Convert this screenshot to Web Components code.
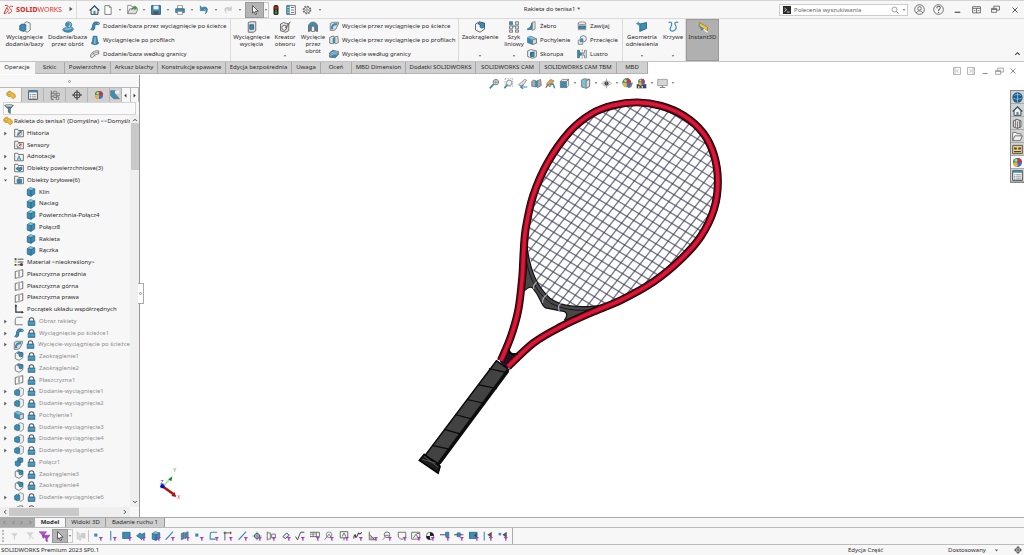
<!DOCTYPE html>
<html lang="pl">
<head>
<meta charset="utf-8">
<title>Rakieta do tenisa1</title>
<style>
  html, body { height: 100%; }
  body { margin: 0; font: 6px/7px "Noto Sans", "Open Sans", sans-serif; color: #2b2b2b; background: #fff; }
</style>
</head>
<body>
<cad-app></cad-app>
<script>
const B = '#3c8db3', L = '#7fbcd6', D = '#1d5876', G = '#666';
const cube = `<path d="M2 4l5-3 7 2v8l-6 4-6-2z" fill="${B}" stroke="${D}"/><path d="M2 4l5-3 7 2-6 3z" fill="${L}"/><path d="M8 6v9M2 4l6 2 6-3" stroke="${D}" fill="none"/>`;
const folder = `<path d="M1 14V2h5l1 2h8v10z" fill="#f4f4f4" stroke="${G}" stroke-width="1.4"/>`;
const solid = `<path d="M7 3l3-2 5 2v9l-4 3-4-2z" fill="#eee" stroke="${G}"/>`;
const funnel = c => `<path d="M2 2h12l-5 6v6l-2-1V8z" fill="${c}"/>`;
const tick = `<path d="M9 9.500h7l-2.500 3V16l-2-1v-2.500z" fill="#a63fc9"/>`;
const lines = (d, c = G, w = 1.3) => `<path d="${d}" fill="none" stroke="${c}" stroke-width="${w}"/>`;
const ball = `<circle cx="8" cy="8" r="6.500" fill="#3a6fd8"/><path d="M8 8V1.500A6.500 6.500 0 0 0 1.500 8z" fill="#2f9e44"/><path d="M8 8H1.500A6.500 6.500 0 0 0 8 14.500z" fill="#f2b52a"/><path d="M8 8V1.500A6.500 6.500 0 0 1 14.500 8z" fill="#d8322a"/><circle cx="6" cy="5" r="2" fill="#fff" opacity=".6"/>`;
const ICONS = {
  home: `<path d="M1 9l7-7 7 7h-2v6H3V9z" fill="#f3f3f3" stroke="#333" stroke-width="1.300"/><path d="M8 2l7 7h-2L8 4 3 9H1z" fill="${D}"/><path d="M6.500 15v-5h3v5" fill="${B}"/>`,
  page: `<path d="M3 1h7l3 3v11H3z" fill="#fff" stroke="${G}" stroke-width="1.300"/><path d="M10 1v3h3" fill="none" stroke="${G}"/>`,
  open: `<path d="M1 14V2h5l1 2h6v3" fill="#fff" stroke="${G}"/><path d="M1 14l3-7h12l-3 7z" fill="#ddd" stroke="${G}"/><path d="M6 9c0-4 3-5 5-5V2l4 3.500L11 9V7C9 7 8 8 6 9z" fill="#3f9b43"/>`,
  save: `<path d="M1 1h14v14H1z" fill="${B}" stroke="${D}" stroke-width="1.400"/><path d="M4 1h8v6H4z" fill="#e9f2f6"/><path d="M4 10h8v5H4z" fill="#555"/>`,
  print: `<path d="M4 1h8v5H4z" fill="#fff" stroke="${G}"/><path d="M1 6h14v6H1z" fill="${B}" stroke="${D}"/><path d="M4 10h8v5H4z" fill="#fff" stroke="${G}"/>`,
  undo: `<path d="M2 1v8h8L7 6.500c4-1 5 3 3 8 5-5 5-11-1-11.500-2 0-3 .5-4 1.500z" fill="${B}" stroke="${D}" stroke-width=".6"/>`,
  redo: `<path d="M14 1v8H6l3-2.500c-4-1-5 3-3 8C1 9.500 1 3.500 7 3c2 0 3 .5 4 1.500z" fill="#ccc"/>`,
  arrow: `<path d="M4 1l9 9H8.500l2 4.500-2 .8-2-4.600L4 13z" fill="#fff" stroke="#333" stroke-width="1.200"/>`,
  light: `<rect x="4" y="0" width="8" height="16" rx="3" fill="#222"/><circle cx="8" cy="4" r="2.500" fill="#d3201c"/><circle cx="8" cy="8.500" r="1.500" fill="#a5801a"/><circle cx="8" cy="12.500" r="2" fill="#2fa63c"/>`,
  list: `<path d="M1 1h14v14H1z" fill="#fff" stroke="${G}" stroke-width="1.400"/><path d="M1 1h5v14H1z" fill="${B}"/><path d="M8 4h5M8 8h5M8 12h5" stroke="${G}" stroke-width="1.400"/><path d="M2 4h3M2 8h3M2 12h3" stroke="#fff"/>`,
  gear: `<circle cx="8" cy="8" r="5.500" fill="none" stroke="${G}" stroke-width="3" stroke-dasharray="2.200 2.100"/><circle cx="8" cy="8" r="4.800" fill="#f7f7f7" stroke="${G}" stroke-width="1.200"/><circle cx="8" cy="8" r="2" fill="none" stroke="${G}" stroke-width="1.200"/>`,
  term: `<path d="M0 0h16v16H0z" fill="#2b2b2b"/><path d="M3 4l4 3.500L3 11M8 12h5" fill="none" stroke="#fff" stroke-width="1.600"/>`,
  find: `<circle cx="7" cy="7" r="5" fill="none" stroke="${G}" stroke-width="1.200"/><path d="M11 11l4 4" stroke="${G}" stroke-width="1.500"/>`,
  user: `<circle cx="8" cy="8" r="7" fill="none" stroke="#555" stroke-width="1.200"/><circle cx="8" cy="6.500" r="2.600" fill="none" stroke="#555" stroke-width="1.200"/><path d="M3.500 13c1-4 8-4 9 0" fill="none" stroke="#555" stroke-width="1.200"/>`,
  help: `<circle cx="8" cy="8" r="7" fill="none" stroke="#555" stroke-width="1.200"/><path d="M5.500 6c0-3.500 5-3.500 5-.5C10.500 7.500 8 7.500 8 10M8 11.500v1.500" fill="none" stroke="#555" stroke-width="1.500"/>`,
  min: lines('M3 13h10', '#555', 2.2),
  dock: lines('M1 3h14v11H1zM1 6h14M8 6v8M3 10h3M10 10h3', '#555', 1.4),
  restore: lines('M1 6h9v7H1zM5 6V2h10v7h-5M1 8h9', '#555', 1.4),
  close: lines('M3 3l10 10M13 3L3 13', '#555', 2),
  dockl: lines('M1 1h14v14H1zM4 1v14M11 5L7 8l4 3', '#777', 1.6),
  dockr: lines('M1 1h14v14H1zM12 1v14M5 5l4 3-4 3', '#777', 1.6),
  up: lines('M3 11l5-5 5 5', '#333', 2.4),
  down: lines('M3 5l5 5 5-5', '#333', 2.4),
  left: lines('M11 3L6 8l5 5', '#333', 2.2),
  right: lines('M5 3l5 5-5 5', '#333', 2.2),
  navl: `<path d="M11 2v12L4 8z" fill="#333"/>`,
  navr: `<path d="M5 2v12l7-6z" fill="#333"/>`,
  caret: `<path d="M3 5h10l-5 6z" fill="#555"/>`,
  exp: `<path d="M4 2l8 6-8 6z" fill="#555"/>`,
  boss: solid + `<path d="M1 6l3-2 5 1v7l-3 2-5-2z" fill="${B}" stroke="${D}"/>`,
  revolve: `<path d="M5 3c2-3 8-2 8 2 0 3-4 4-7 4-4 0-5 2-5 3 2 4 13 4 14-1 0-2-2-3-3-3" fill="${L}" stroke="${D}"/><circle cx="7" cy="5" r="3" fill="${B}"/><path d="M2 12c3 2 9 2 12-1" stroke="${B}" stroke-width="2.500" fill="none"/>`,
  sweep: `<path d="M2 12c3 2 4-1 4-4s2-6 6-4" fill="none" stroke="${D}" stroke-width="5"/><path d="M2 12c3 2 4-1 4-4s2-6 6-4" fill="none" stroke="${B}" stroke-width="3.500"/><circle cx="13" cy="4" r="2" fill="${L}" stroke="${D}"/>`,
  loft: `<path d="M5 2h6l1 8 2 3c-2 3-10 3-12 0l2-3z" fill="${B}" stroke="${D}"/><path d="M7 3h2v11H6z" fill="${L}"/>`,
  boundary: `<path d="M1 9c3-5 8-7 13-6v5c-4 0-8 2-10 6l-3-1z" fill="#eee" stroke="${G}" stroke-width="1.200"/><path d="M2 10c3-3 7-5 12-5M5 6l3 6" fill="none" stroke="${G}"/>`,
  cut: `<path d="M3 2l3-1h7v12l-3 2H3z" fill="#ddd" stroke="${G}" stroke-width="1.200"/><path d="M5 5h5v6H5z" fill="${B}" stroke="${D}"/>`,
  hole: `<path d="M2 4l4-2 7 2v9l-4 2-7-2z" fill="#ddd" stroke="${G}" stroke-width="1.200"/><circle cx="7" cy="9" r="3.200" fill="#fff" stroke="#444"/><path d="M15 1L8 9l2 0z" fill="#e8953a" stroke="#444" stroke-width=".7"/>`,
  revcut: `<path d="M2 14V6c2-6 10-6 12 0v8l-3-1V8H5v5z" fill="${B}" stroke="${G}" stroke-width="1.200"/><path d="M6 14V7h4v7z" fill="#eee" stroke="${G}"/>`,
  sweepcut: `<path d="M2 4l4-2h9v3l-4 8-3 2H2z" fill="#ddd" stroke="${G}" stroke-width="1.200"/><path d="M5 13c-1-6 2-8 8-8" fill="none" stroke="${B}" stroke-width="3.500"/>`,
  loftcut: `<path d="M1 4l4-2h3v11l-3 1-4-1zM9 3l5-1 1 10-4 2-2-1z" fill="#ddd" stroke="${G}" stroke-width="1.200"/><path d="M6 5h4v8H6z" fill="${B}"/>`,
  boundcut: `<path d="M1 6l5-4 9 2v5l-5 5-9-1z" fill="${B}" stroke="${G}" stroke-width="1.200"/><path d="M2 8c3-3 7-4 12-3M2 11c3-3 6-4 11-3" fill="none" stroke="#eee"/>`,
  fillet: `<path d="M2 4l5-3 7 2v8l-6 4-6-3z" fill="#f4f4f4" stroke="${G}" stroke-width="1.300"/><path d="M7 2l7 1v4c-1 3-4 3-6 1 1-3-1-4-3-4z" fill="${B}" stroke="${D}"/>`,
  pattern: `<g fill="#ddd" stroke="${G}"><path d="M2 1h4v4H2zM2 6.500h4v4H2zM2 12h4v3H2zM10 1h4v4h-4zM10 6.500h4v4h-4zM10 12h4v3h-4z"/></g><path d="M2 1h4v4H2z" fill="${B}"/><path d="M7 5l3 2-3 2z" fill="${B}"/>`,
  rib: `<path d="M8 2l5-1v12l-5 2z" fill="#ddd" stroke="${G}"/><path d="M8 3v10l-7 1v-2c4 0 5-4 7-9z" fill="${B}" stroke="${D}"/>`,
  draft: `<path d="M1 4l5-2 9 4v7l-6 2-8-3z" fill="${B}" stroke="${D}"/><path d="M1 4l5-2 9 4-6 2z" fill="${L}"/><path d="M9 8l6-2v7l-6 2z" fill="#ddd" stroke="${G}"/>`,
  shell: `<path d="M1 3l5-2 9 2v9l-6 3-8-3z" fill="#eee" stroke="${G}" stroke-width="1.300"/><path d="M5 5l7-1v8l-4 1-3-1z" fill="${D}"/><path d="M7 6h4v6H7z" fill="${B}"/>`,
  wrap: `<path d="M2 3h12v11H2z" fill="#ddd" stroke="${G}"/><ellipse cx="8" cy="3.500" rx="6" ry="2.200" fill="#eee" stroke="${G}"/><path d="M3 8h10v4H3z" fill="${B}" stroke="${D}"/>`,
  inter: `<circle cx="10" cy="6" r="5" fill="#eee" stroke="${G}" stroke-width="1.200"/><path d="M2 8h7v7H2z" fill="#ddd" stroke="${G}"/><path d="M5 8c0-3 5-4 5-1v4H5z" fill="${B}"/>`,
  mirror: `<path d="M1 2h3v4h3v4H4v4H1z" fill="${B}" stroke="${D}"/><path d="M15 2h-3v4h-2v4h2v4h3z" fill="#ddd" stroke="${G}"/><path d="M8.500 1v14" stroke="${G}" stroke-dasharray="3 1"/>`,
  geom: `<path d="M5 4l9-2v8l-9 4z" fill="${B}" stroke="${D}"/><path d="M3 1v5M.500 3.500h5" stroke="${B}" stroke-width="1.500"/>`,
  curve: lines('M2 2c5-2 5 3 3 6s0 7 4 5 4-5 2-8 2-4 4-3', B, 1.6),
  instant: `<path d="M3 2l11 6v5L3 7z" fill="#ecc44a" stroke="#9b7a1a"/><path d="M2 5l4 8 3-2z" fill="${B}"/><path d="M9 11l5 4" stroke="#fff" stroke-width="1.600"/>`,
  part: `<path d="M1 6c2-5 7-5 8-2l2 1c3 0 4 3 4 6l-3 3-3-2-2-2c-3 1-6 0-6-4z" fill="#f0b93a" stroke="#a87710"/><circle cx="5" cy="6" r="1.800" fill="#fff6d8" stroke="#a87710"/>`,
  props: `<path d="M1 1h14v14H1z" fill="#fff" stroke="#444" stroke-width="1.400"/><path d="M1 1h14v3H1z" fill="${B}"/><path d="M3 7h2M3 10h2M3 13h2" stroke="${B}" stroke-width="1.600"/><path d="M6 7h7M6 10h7M6 13h7" stroke="#555"/>`,
  config: `<path d="M2 1v14h4M2 5h4M2 10h4" fill="none" stroke="#555" stroke-width="1.300"/><path d="M6 2h4v4H6zM6 8h4v4H6zM11 5h4v4h-4zM10 11h4v4h-4z" fill="#ddd" stroke="#555"/>`,
  target: `<circle cx="8" cy="8" r="5" fill="none" stroke="#333" stroke-width="1.500"/><path d="M8 0v16M0 8h16" stroke="#333" stroke-width="1.500"/>`,
  ball,
  cam: `<path d="M1 1h8v6l6 7H6L1 9z" fill="${B}" stroke="${G}"/><path d="M8 1h7v5H8z" fill="#eee"/>`,
  filter: `<path d="M1 2h14l-5 6v7l-3-2V8z" fill="${B}" stroke="#444"/><ellipse cx="8" cy="3" rx="6.500" ry="1.800" fill="#e6eef2" stroke="#444"/>`,
  hist: folder + `<path d="M5 12l7-7" stroke="${B}" stroke-width="2.500"/><circle cx="9" cy="9" r="3" fill="none" stroke="${G}"/>`,
  sensor: folder + `<circle cx="8" cy="9" r="3.500" fill="#fff" stroke="${G}"/><path d="M8 9l4-3" stroke="#d33" stroke-width="2"/><path d="M5 12l2-2" stroke="${B}" stroke-width="2"/>`,
  annot: folder + `<path d="M5 13l3-7 3 7M6 11h4" fill="none" stroke="${B}" stroke-width="1.500"/>`,
  surf: folder + `<path d="M3 9l4-3 2 2 3-2 1 4-4 3-3-2z" fill="${B}" stroke="${D}"/>`,
  bodies: folder + `<path d="M5 7l3-1 4 1v5l-4 1-3-1z" fill="${B}" stroke="${D}"/>`,
  cube,
  material: `<path d="M1 2h3v3H1zM1 11h3v3H1z" fill="#444"/><path d="M1 6.500h3v3H1z" fill="#e2b53c"/><path d="M6 3.500h9M6 8h9M6 12.500h4" stroke="#444" stroke-width="1.500"/><circle cx="12" cy="12" r="2.500" fill="#444"/>`,
  plane: lines('M2 4l4-1M10 2l4-1v11l-4 1M6 14l-4 1V4M8 1v14', '#555', 1.3),
  origin: `<path d="M3 2v11h11" fill="none" stroke="#333" stroke-width="2"/><path d="M1 4l2-4 2 4zM12 11l4 2-4 2z" fill="#333"/>`,
  sketch: lines('M14 2H6C3 2 2 4 2 6v8h12', '#666', 1.3),
  combine: `<path d="M6 2l4-1 4 1v6l-4 1-4-1z" fill="${B}" stroke="${D}"/><path d="M2 7l4-1 4 1v6l-4 2-4-2z" fill="${B}" stroke="${D}"/>`,
  lock: `<path d="M4 8V5c0-5 8-5 8 0v3" fill="none" stroke="#555" stroke-width="1.800"/><path d="M2 7h12v8H2z" fill="${B}" stroke="${D}"/><path d="M2.500 10.500h11" stroke="${L}"/>`,
  zoomfit: `<circle cx="10" cy="6" r="4" fill="#eaf4f8" stroke="${G}" stroke-width="1.200"/><path d="M7 9l-6 6" stroke="${B}" stroke-width="2.500"/><path d="M10 3v6M7 6h6" stroke="${G}"/>`,
  zoomarea: `<path d="M3 1h11v11H3z" fill="none" stroke="#888" stroke-dasharray="2 1.500"/><circle cx="9" cy="7" r="4" fill="#eaf4f8" stroke="${G}"/><path d="M6 10l-4 5" stroke="${B}" stroke-width="2.500"/>`,
  prev: `<path d="M2 10L11 2l3 1-6 9z" fill="#ddd" stroke="#777"/><path d="M15 13H6M9 10l-4 3 4 3" fill="none" stroke="${B}" stroke-width="1.600"/>`,
  section: `<path d="M1 5l3-2 3 1v9l-6-1zM9 4l5-2 1 9-6 3z" fill="#aaa" stroke="${G}"/><path d="M6 4h4v9H6z" fill="${B}"/>`,
  dynview: `<path d="M2 9l6-7 5 2-6 9z" fill="#e8a23c" stroke="#777"/><path d="M7 9h5l2 6" fill="none" stroke="${B}" stroke-width="2"/><path d="M1 14l4-5" stroke="#777" stroke-width="2"/>`,
  orient: `<path d="M2 5h9v9H2z" fill="${B}" stroke="${G}"/><path d="M2 5l3-3h9l-3 3zM14 2v9l-3 3V5z" fill="#eee" stroke="${G}"/>`,
  display: `<path d="M2 3l4-2 8 1v10l-5 3-7-2z" fill="${L}" stroke="${G}"/><path d="M9 4l5-2v10l-5 3z" fill="#ddd" stroke="${G}"/>`,
  eye: `<path d="M1 8c4-5 10-5 14 0-4 5-10 5-14 0z" fill="#ddd" stroke="#aaa"/><circle cx="8" cy="8" r="3" fill="#444"/><path d="M8 1v14" stroke="#888"/>`,
  appear: `<g transform="translate(-1 -1)">${ball}</g><path d="M15 7l-6 7 4-1z" fill="#e8953a" stroke="#555"/>`,
  scene: `<path d="M1 9h14v6H1z" fill="#444"/><g transform="translate(2 0) scale(.75)">${ball}</g><path d="M3 12h2v2H3zM8 12h2v2H8z" fill="#fff"/>`,
  monitor: `<path d="M1 2h14v9H1z" fill="#d6d6d6" stroke="#888"/><path d="M7 11h2v2h3v1.500H4V13h3z" fill="#888"/>`,
  globe: `<circle cx="8" cy="8" r="7.500" fill="#1d5f8c"/><path d="M3 5c3-2 7-2 10 0M2 9c4 2 8 2 12 0M8 1v14" stroke="#8fc3e0" stroke-width="1.200" fill="none"/>`,
  library: `<path d="M2 4l5-2 6 2v9l-5 2-6-2z" fill="#ddd" stroke="#555" stroke-width="1.300"/><path d="M5 3v10M8 5v10M11 4v9" stroke="#555" fill="none"/>`,
  folder: `<path d="M1 14V2h5l1 2h6v3" fill="#fff" stroke="${G}" stroke-width="1.300"/><path d="M1 14l3-7h11l-3 7z" fill="#eee" stroke="${G}" stroke-width="1.300"/>`,
  palette: `<path d="M1 2h14v12H1z" fill="#f1d27a" stroke="#555" stroke-width="1.400"/><path d="M3 5h4v3H3zM9 5h4v3H9zM3 10h10v2H3z" fill="#444"/>`,
  f0: funnel('#d2d2d2'), f1: funnel('#d8d8d8') + lines('M6 3l8 10', '#ccc'),
  f2: `<path d="M0 1h11L7 6v5L5 9V6z" fill="#b558cf" stroke="#6d2485" stroke-width=".6"/><path d="M5 6h11l-4 5v5l-2-2v-3z" fill="#a63fc9" stroke="#6d2485" stroke-width=".6"/>`,
  selx: `<path d="M2 1l8 8H6l2 5-2 1-2-4-2 2z" fill="#ddd" stroke="#bbb"/><path d="M8 3h7v9H9z" fill="#ccc"/>`,
  t0: `<path d="M2 4h5v5H2z" fill="${B}"/>` + tick, t1: lines('M6 0v15', B, 1.8) + tick,
  t2: `<path d="M1 2h12v10H1z" fill="${B}" stroke="${D}"/>` + tick,
  t3: `<path d="M1 8l5-5 3 2 5-2v6l-5 5-3-3z" fill="${B}" stroke="${D}"/>` + tick,
  t4: cube + tick, t5: lines('M1 14L13 1', B, 1.8) + tick,
  t6: `<path d="M2 4l5-2v10l-5 2zM8 3l5-2v9l-5 2z" fill="${B}" stroke="${G}"/>` + tick,
  t7: lines('M13 2H5C2 2 2 4 2 5v8h9', B, 1.8) + tick,
  t8: lines('M3 15V3h11M1 3h4M3 1v4M12 1v4', '#555', 1.5) + tick,
  t9: `<circle cx="8" cy="8" r="4" fill="#dbeaf1" stroke="${D}" stroke-width="1.500"/><path d="M8 1v14M1 8h14" stroke="#555"/>` + tick,
  t10: lines('M2 1v14M2 3h5v10H2M9 5h6v6H9z', '#555', 1.2) + tick,
  t11: `<path d="M3 9l6-6 4 4-6 5z" fill="#dbeaf1" stroke="#444" stroke-width="1.500"/>` + tick,
  t12: lines('M1 9l3 5 5-12h6', '#444', 1.5) + tick,
  t13: lines('M0 2h15v7H0zM5 2v7M10 2v7M2 5h2M7 5h2', '#555', 1.3) + tick,
  t14: `<circle cx="8" cy="6" r="4.500" fill="none" stroke="#555"/>` + lines('M1 14l7-9 4 6') + tick,
  t15: lines('M2 1h12v10H2zM5 9l3-6 3 6M8 11v4', '#444', 1.2) + tick,
  t16: lines('M1 12c1-6 3-8 3-4s2 2 4-3 1 4 6-3', '#444', 1.8) + tick,
  t17: lines('M2 1v13h12M2 5l9 9M5 8v5M8 10v4', '#555', 1.3) + tick,
  t18: `<circle cx="8" cy="6" r="4.500" fill="none" stroke="#555" stroke-width="1.300"/>` + lines('M5 7h6M1 14l4-4') + tick,
  t19: lines('M2 2h12v6c0 3-3 5-6 5S2 11 2 8z', '#666', 1.4) + tick,
  t20: lines('M1 2h13v11H1zM4 11l4-6 3 6M9 4h4', '#666', 1.4) + tick,
  t21: `<circle cx="8" cy="8" r="6" fill="#eee" stroke="#333"/><path d="M8 8V2a6 6 0 0 1 6 6zM8 8v6a6 6 0 0 1-6-6z" fill="#222"/>` + tick,
  t22: lines('M0 6h9', '#444', 1.5) + `<path d="M9 2h5v7H9z" fill="${B}" stroke="${D}"/>` + tick,
  t23: lines('M0 6h15', '#444', 1.5) + `<path d="M5 3h5v6H5z" fill="${B}" stroke="${D}"/>` + tick,
  t24: `<path d="M0 2h13v10H0z" fill="${B}" stroke="${D}"/><path d="M12 3l-4 4 4 4z" fill="#444"/>` + tick,
  t25: lines('M2 1v14', B, 1.8) + `<path d="M14 1L7 6l7 5z" fill="#555"/>` + tick,
  t26: `<path d="M1 3h4v4H1z" fill="${B}"/><path d="M14 1L7 6l7 5z" fill="#555"/>` + tick
};

const fragment = html => Object.assign(document.createElement('template'), { innerHTML: html }).content;
function define(name, css, html, setup) {
  const t = document.createElement('template');
  t.innerHTML = `<style>:host{box-sizing:border-box}*{box-sizing:border-box}button{font:inherit;color:inherit;background:none;border:0;padding:0;margin:0}${css}</style>${html}`;
  customElements.define(name, class extends HTMLElement {
    connectedCallback() {
      if (this.shadowRoot) return;
      this.attachShadow({ mode: 'open' }).append(t.content.cloneNode(true));
      if (setup) setup(this, this.shadowRoot);
    }
  });
}
const ico = (n, s = '') => `<cad-icon name="${n}" ${s && `style="--s:${s}px"`}></cad-icon>`;
const btn = (n, label, s) => `<button type="button" aria-label="${label}">${ico(n, s)}</button>`;

define('cad-icon', `:host{display:inline-flex;flex:none;width:var(--s,10px);height:var(--s,10px)}svg{width:100%;height:100%;display:block}`, '',
  (h, r) => r.append(fragment(`<svg viewBox="0 0 16 16" aria-hidden="true">${ICONS[h.getAttribute('name')]}</svg>`)));

/* Title bar */
define('cad-titlebar', `
  :host{display:flex;align-items:center;height:19px;background:#f7f7f7;border-top:1px solid #d4d4d4;border-bottom:1px solid #dadada}
  .brand{display:flex;align-items:center;gap:2px;width:66px;padding-left:3px;color:#d9362f}
  .brand svg{width:11px;height:11px}
  .brand b{font-weight:800}
  .brand span{font-size:7px;line-height:8px}
  .more{width:11px;height:17px;border-right:1px solid #dcdcdc;display:flex;align-items:center;padding-left:2px}
  .quick{display:flex;align-items:center;padding-left:10px}
  .quick button{display:flex;align-items:center;justify-content:center;width:10px;height:16px}
  .quick .w{width:14px}
  .quick .x{width:16px}
  .quick .sel{width:19px;background:#b4b4b4;border:1px solid #999}
  .quick .seld{width:5px;border:1px solid #ccc;border-left:0}
  h1{flex:1;margin:0;font:inherit;text-align:center}
  .search{display:flex;align-items:center;gap:3px;width:129px;height:12px;border:1px solid #ccc;background:#fff;padding:0 1px 0 3px}
  .search input{flex:1;min-width:0;border:0;padding:0;font:inherit;height:9px;outline:0;background:none}
  .search input::placeholder{color:#666;opacity:1}
  .win{display:flex;padding-left:2px}
  .win button{width:19px;height:16px;display:flex;align-items:center;justify-content:center}
`, `
  <div class="brand"><svg viewBox="0 0 22 22" aria-hidden="true"><g fill="none" stroke="#d9362f" stroke-width="2"><path d="M4 3c7-1 8 2 3 5M2 19l5-11c5 0 5 10-5 11M20 5c-7-2-9 2-5 5s2 9-5 8"/></g></svg><span><b>SOLID</b>WORKS</span></div>
  <div class="more">${btn('exp', 'Menu', 6)}</div>
  <div class="quick">
    ${[['home', 'Strona główna', 11], ['page', 'Nowy', 10], ['caret'], ['open', 'Otwórz', 11], ['caret'], ['save', 'Zapisz', 10], ['caret'], ['print', 'Drukuj', 10], ['caret'], ['undo', 'Cofnij', 10], ['caret'], ['redo', 'Ponów', 10]]
      .map(([n, l, s]) => n === 'caret' ? btn('caret', 'Więcej', 4) : `<button class="w" type="button" aria-label="${l}">${ico(n, s)}</button>`).join('')}
    ${btn('caret', 'Więcej', 4)}<button class="sel" type="button" aria-label="Wybierz">${ico('arrow', 10)}</button><button class="seld" type="button" aria-label="Więcej">${ico('caret', 4)}</button>
    <button class="w" type="button" aria-label="Przebuduj">${ico('light', 10)}</button>
    <button class="x" type="button" aria-label="Właściwości">${ico('list', 10)}</button>
    <button class="x" type="button" aria-label="Opcje">${ico('gear', 10)}</button>
    ${btn('caret', 'Więcej', 4)}
  </div>
  <h1>Rakieta do tenisa1 *</h1>
  <div class="search">${ico('term', 8)}<input type="search" aria-label="Polecenia wyszukiwania" placeholder="Polecenia wyszukiwania">${ico('find', 8)}${ico('caret', 4)}</div>
  <div class="win">${btn('user', 'Konto', 11)}${btn('help', 'Pomoc', 11)}${btn('min', 'Minimalizuj', 9)}${btn('dock', 'Rozciągnij', 9)}${btn('restore', 'Przywróć', 9)}${btn('close', 'Zamknij', 8)}</div>`);

/* Ribbon commands: large with caption below, and small with caption beside */
define('cad-big', `
  :host{display:flex;width:var(--w,40px)}
  button{flex:1;display:flex;flex-direction:column;align-items:center;padding-top:2px;text-align:center;white-space:nowrap}
  .t{height:14px;margin-top:1px}
  .c{margin-top:5px;height:6px}
  :host([active]) button{background:#b0b0b0;border:1px solid #999;padding-top:1px}
`, `<button type="button"><span class="t"><slot></slot></span><span class="c"></span></button>`,
  (h, r) => {
    r.querySelector('button').prepend(fragment(ico(h.getAttribute('icon'), 12)));
    if (h.hasAttribute('menu')) r.querySelector('.c').innerHTML = ico('caret', 4);
  });
define('cad-small', `
  :host{display:flex;height:14px}
  button{display:flex;align-items:center;gap:3px;white-space:nowrap}
`, `<button type="button"><slot></slot></button>`,
  (h, r) => r.querySelector('button').prepend(fragment(ico(h.getAttribute('icon'), 10))));

const big = (i, t, w, x = '') => `<cad-big icon="${i}" style="--w:${w}px" ${x}>${t}</cad-big>`;
const small = (i, t) => `<cad-small icon="${i}">${t}</cad-small>`;
define('cad-ribbon', `
  :host{display:flex;height:43px;background:#f7f7f7;border-bottom:1px solid #c4c4c4}
  .g{display:flex;border-right:1px solid #dadada}
  .col{display:flex;flex-direction:column}
  .wide{padding-left:1px}
  .end{margin-left:auto;display:flex;align-items:flex-end;padding:0 3px 2px 0}
`, `
  <div class="g" style="width:231px;padding-left:3px">${big('boss', 'Wyciągnięcie<br>dodania/bazy', 43)}${big('revolve', 'Dodanie/baza<br>przez obrót', 43)}
    <div class="col wide">${small('sweep', 'Dodanie/baza przez wyciągnięcie po ścieżce')}${small('loft', 'Wyciągnięcie po profilach')}${small('boundary', 'Dodanie/baza według granicy')}</div></div>
  <div class="g" style="width:228px">${big('cut', 'Wyciągnięcie<br>wycięcia', 41)}${big('hole', 'Kreator<br>otworu', 26, 'menu')}${big('revcut', 'Wycięcie<br>przez<br>obrót', 30)}
    <div class="col wide">${small('sweepcut', 'Wycięcie przez wyciągnięcie po ścieżce')}${small('loftcut', 'Wycięcie przez wyciągnięcie po profilach')}${small('boundcut', 'Wycięcie według granicy')}</div></div>
  <div class="g" style="width:164px">${big('fillet', 'Zaokrąglenie', 42, 'menu')}${big('pattern', 'Szyk<br>liniowy', 26, 'menu')}
    <div class="col" style="width:50px">${small('rib', 'Żebro')}${small('draft', 'Pochylenie')}${small('shell', 'Skorupa')}</div>
    <div class="col">${small('wrap', 'Zawijaj')}${small('inter', 'Przecięcie')}${small('mirror', 'Lustro')}</div></div>
  <div class="g" style="width:63px">${big('geom', 'Geometria<br>odniesienia', 38, 'menu')}${big('curve', 'Krzywe', 24, 'menu')}</div>
  ${big('instant', 'Instant3D', 33, 'active')}
  <div class="end">${btn('up', 'Zwiń', 7)}</div>`);

define('cad-tabs', `
  :host{display:flex;height:13px;background:#fff}
  button{height:12px;background:#cfcfcf;border-right:1px solid #a8a8a8;border-bottom:1px solid #b4b4b4;white-space:nowrap}
  button[aria-selected=true]{background:#f7f7f7;border-color:#f7f7f7}
  div{display:flex}
`, `<div role="tablist">${[['Operacje', 35], ['Szkic', 30], ['Powierzchnie', 46], ['Arkusz blachy', 47], ['Konstrukcje spawane', 68], ['Edycja bezpośrednia', 66], ['Uwaga', 29], ['Oceń', 31], ['MBD Dimension', 54], ['Dodatki SOLIDWORKS', 70], ['SOLIDWORKS CAM', 64], ['SOLIDWORKS CAM TBM', 77], ['MBD', 31]]
    .map(([t, w], i) => `<button type="button" role="tab" aria-selected="${!i}" style="width:${w}px">${t}</button>`).join('')}</div>`);

/* Feature tree */
define('cad-node', `
  :host{display:flex;align-items:center;gap:3px;height:12px;white-space:nowrap;padding-left:3px}
  .e{width:8px;display:flex;align-items:center}
  :host([root]) .e{display:none}
  :host([root]){gap:1px}
  :host([sub]){padding-left:15px}
  :host([locked]){color:#8c8c8c}
`, `<span class="e"></span><slot></slot>`,
  (h, r) => {
    const e = h.getAttribute('exp'), box = r.querySelector('.e');
    if (e) box.innerHTML = e === 'open' ? ico('caret', 5) : ico('exp', 5);
    box.after(fragment(ico(h.getAttribute('icon'), 10) + (h.hasAttribute('locked') ? ico('lock', 9) : '')));
  });
const NODES = [['part', 'Rakieta do tenisa1 (Domyślna) &lt;&lt;Domyślna', 'root'], ['hist', 'Historia', 'exp=c'], ['sensor', 'Sensory', ''], ['annot', 'Adnotacje', 'exp=c'], ['surf', 'Obiekty powierzchniowe(3)', 'exp=c'], ['bodies', 'Obiekty bryłowe(6)', 'exp=open'],
  ...['Klin', 'Naciag', 'Powierzchnia-Połącz4', 'Połącz8', 'Rakieta', 'Rączka'].map(t => ['cube', t, 'sub']),
  ['material', 'Materiał &lt;nieokreślony&gt;', ''], ['plane', 'Płaszczyzna przednia', ''], ['plane', 'Płaszczyzna górna', ''], ['plane', 'Płaszczyzna prawa', ''], ['origin', 'Początek układu współrzędnych', ''],
  ...[['sketch', 'Obraz rakiety', 1], ['sweep', 'Wyciągnięcie po ścieżce1', 1], ['sweepcut', 'Wycięcie-wyciągnięcie po ścieżce', 1], ['fillet', 'Zaokrąglenie1'], ['fillet', 'Zaokrąglenie2'], ['plane', 'Płaszczyzna1'], ['boss', 'Dodanie-wyciągnięcie1', 1], ['boss', 'Dodanie-wyciągnięcie2', 1], ['draft', 'Pochylenie1'], ['boss', 'Dodanie-wyciągnięcie3', 1], ['boss', 'Dodanie-wyciągnięcie4', 1], ['boss', 'Dodanie-wyciągnięcie5', 1], ['combine', 'Połącz1'], ['fillet', 'Zaokrąglenie3'], ['fillet', 'Zaokrąglenie4'], ['boss', 'Dodanie-wyciągnięcie6', 1], ['boundary', 'Powierzchnia1']].map(([i, t, e]) => [i, t, 'locked' + (e ? ' exp=c' : '')])];
define('cad-tree', `
  :host{display:flex;flex-direction:column;width:140px;background:#f7f7f7;border-right:1px solid #999;position:relative;min-height:0}
  .top{height:13px;flex:none;display:flex;align-items:center;justify-content:center;border-bottom:1px solid #b8b8b8}
  .top i,.knob i{width:3px;height:3px;border-radius:50%;border:1px solid #999}
  .tabs{display:flex;height:14px;flex:none;background:#d0d0d0}
  .tabs button{width:22px;display:flex;align-items:center;justify-content:center;border-right:1px solid #b4b4b4}
  .tabs .on{background:#f7f7f7}
  .tabs .cut{width:12px;justify-content:flex-start}
  .tabs .nav{flex:1;background:#f7f7f7}
  .filter{display:flex;align-items:center;height:13px;flex:none;margin:0 3px;border:1px solid #d4d4d4;background:#fafafa}
  .mid{flex:1;display:flex;min-height:0;overflow:hidden}
  .nodes{flex:1;min-width:0;overflow:hidden}
  cad-node:nth-child(4n){height:11px}
  .vs{width:9px;flex:none;background:#efefef;display:flex;flex-direction:column;align-items:center;padding:2px 0}
  .vs i{width:8px;flex:none;height:47px;background:#c9c9c9}
  .vs cad-icon:last-child{margin-top:auto}
  .hs{display:flex;align-items:center;height:10px;flex:none;background:#efefef;margin-right:9px;padding:0 2px;gap:1px}
  .hs i{width:70px;height:8px;background:#c9c9c9;margin-right:auto}
  .knob{position:absolute;left:138px;top:47%;width:6px;height:21px;background:#fff;border:1px solid #aaa;border-left:0;display:flex;align-items:center;justify-content:center}
`, `
  <div class="top"><i></i></div>
  <div class="tabs"><button type="button" class="on" aria-label="Drzewo operacji">${ico('part', 10)}</button>${btn('props', 'Właściwości', 10)}${btn('config', 'Konfiguracje', 10)}${btn('target', 'Wymiary', 10)}${btn('ball', 'Wygląd', 10)}<button type="button" class="cut" aria-label="CAM">${ico('cam', 10)}</button><button type="button" class="nav" aria-label="W lewo">${ico('navl', 5)}</button><button type="button" class="nav" aria-label="W prawo">${ico('navr', 5)}</button></div>
  <div class="filter">${ico('filter', 10)}</div>
  <div class="mid"><div class="nodes" role="tree">${NODES.map(([i, t, a]) => `<cad-node role="treeitem" icon="${i}" ${a}>${t}</cad-node>`).join('')}</div>
  <div class="vs">${ico('up', 6)}<i></i>${ico('down', 6)}</div></div>
  <div class="hs">${ico('left', 6)}<i></i>${ico('right', 6)}</div>
  <div class="knob"><i></i></div>`);

/* Model drawing: smooth curves through a list of points */
function curve(p) {
  let d = `M${p[0]}`;
  for (let i = 0; i < p.length - 1; i++) {
    const a = p[i - 1] || p[i], b = p[i], c = p[i + 1], e = p[i + 2] || c;
    d += `C${b[0] + (c[0] - a[0]) / 6} ${b[1] + (c[1] - a[1]) / 6} ${c[0] - (e[0] - b[0]) / 6} ${c[1] - (e[1] - b[1]) / 6} ${c}`;
  }
  return d;
}
define('cad-model', `:host{display:block;min-width:0;min-height:0}svg{width:100%;height:100%;display:block}`, '', (h, r) => {
  const head = [[523, 250], [525, 228], [532.5, 195], [547, 162], [569, 131], [591, 113], [613, 104.500], [637, 101.500], [661, 105], [684, 115], [703, 132], [714, 154], [718, 181], [714, 209], [701, 236], [681, 259], [653, 282], [621, 300], [590, 313]];
  const frame = [[500, 361], [510, 337], [517.500, 310], [521.500, 277], ...head, [560, 327], [533, 343], [507, 367]];
  const inner = curve([...head, [587, 308], [553, 303], [537, 282], [527, 248]]) + 'z';
  const fan = (angle, gap, n) => {
    const a = angle * Math.PI / 180, ux = Math.cos(a), uy = Math.sin(a);
    let s = '';
    for (let i = -n; i <= n; i++) {
      const cx = 625 - uy * gap * i, cy = 205 + ux * gap * i;
      s += `M${cx - ux * 150} ${cy - uy * 150}L${cx + ux * 150} ${cy + uy * 150}`;
    }
    return s;
  };
  const f = curve(frame);
  const wraps = [[[488, 369], [506, 373]], [[477, 385], [496, 389]], [[466, 400], [484, 404]], [[454, 415], [472, 420]], [[443, 430], [461, 435]], [[431, 446], [449, 450]]];
  r.append(fragment(`<svg viewBox="139 74 885 444" role="img" aria-label="Model rakiety">
    <defs><clipPath id="c"><path d="${inner}"/></clipPath></defs>
    <g clip-path="url(#c)" stroke="#3c4058" stroke-opacity=".68" stroke-width="1.400" fill="none"><path d="${fan(-52, 8, 14)}"/><path d="${fan(31, 8.6, 17)}"/></g>
    <path d="M526 243C529 272 537 287 549 298C560 306 575 309 606 305L569 323L564 320C568 315 566 311 560 311L545 308C540 306 541 298 532 288C529 286 527 288 523 291L521 285Z" fill="#484848" stroke="#111" stroke-width="1.200"/>
    <path d="M526 262C530 285 541 296 550 303C562 310 577 311 590 310" fill="none" stroke="#151515"/>
    <path d="M536 282q-4 3-3 7M547 294q-6 4-5 9M561 303q-5 2-2 9" fill="none" stroke="#a5a9bd" stroke-width="1.200"/>
    <path d="M499 362L508 347L510 354L517 353L506 370Z" fill="#22122e"/>
    <g fill="none" stroke-linejoin="round"><path d="${f}" stroke="#0b0405" stroke-width="8"/><path d="${f}" stroke="#6d0a19" stroke-width="6.200"/><path d="${f}" stroke="#de1738" stroke-width="3.600"/></g>
    <path d="M508 349q0 7 9 5" fill="none" stroke="#000" stroke-width="2"/>
    <path d="M495.500 361L508 370L438 465L424 456Z" fill="#424242" stroke="#0a0a0a" stroke-width="1.500"/>
    <path d="M507 371L438 464" stroke="#0d0d0d" stroke-width="3.500"/>
    <path d="${wraps.map(([a, b]) => `M${a}L${b}`).join('')}" stroke="#0a0a0a" stroke-width="1.200"/>
    <path d="M423 455L439 467L437 474L418 461Z" fill="#1c1c1c" stroke="#000" stroke-width="1.500"/><path d="M423 457L437 468M421 460L435 464" stroke="#666" stroke-width=".8"/>
    <g stroke-width="1.500"><path d="M161 487L168 479" stroke="#9be89b"/><path d="M166 480l4-3-1 5z" fill="#1d7a2a"/><path d="M160 487L171 495" stroke="#b30c0c" stroke-width="2.500"/><path d="M169 497l3-4 2 5z" fill="#b30c0c"/><circle cx="160" cy="487" r="2.200" fill="#0e10c0"/></g>
    <g font-size="5"><text x="171" y="473" fill="#3aa545">Y</text><text x="175" y="500" fill="#e33">X</text><text x="158" y="485" fill="#22c">Z</text></g>
  </svg>`));
});

define('cad-view', `
  :host{display:grid;grid-template:minmax(0,1fr)/minmax(0,1fr);background:#fff;min-width:0;min-height:0}
  cad-model,.over{grid-area:1/1}
  .over{display:grid;grid-template-columns:1fr auto 1fr;align-items:start}
  .hud{display:flex;align-items:center;height:16px;grid-column:2}
  .hud button{width:14px;display:flex;justify-content:center}
  .hud .s{width:7px}
  .side{display:flex;flex-direction:column;align-items:flex-end}
  .win{display:flex;height:15px;align-items:center;margin:-10px 4px 0 0;padding-bottom:3px}
  .win button{width:14px;display:flex;justify-content:center;opacity:.65}
  .rail{width:14px;margin-top:10px;border:1px solid #888;border-right:0;background:#d2d2d2}
  .rail button{display:flex;width:13px;height:13px;align-items:center;justify-content:center;border-bottom:1px solid #aaa}
  .rail button:nth-child(6){background:#fff}
`, `
  <cad-model></cad-model>
  <div class="over"><div class="hud" role="toolbar">${['zoomfit', 'zoomarea', 'prev', 'section', 'dynview', 'orient', '', 'display', '', 'eye', '', 'appear', 'scene', '', 'monitor', ''].map(n => n ? btn(n, n, 11) : `<button type="button" class="s" aria-label="Więcej">${ico('caret', 4)}</button>`).join('')}</div>
  <div class="side"><div class="win">${btn('dockl', 'Panel lewy', 8)}${btn('dockr', 'Panel prawy', 8)}${btn('min', 'Minimalizuj', 8)}${btn('restore', 'Przywróć', 9)}${btn('close', 'Zamknij', 8)}</div>
  <div class="rail" role="toolbar">${['globe', 'home', 'library', 'folder', 'palette', 'ball', 'props'].map(n => btn(n, n, 11)).join('')}</div></div></div>`);

define('cad-sheets', `
  :host{display:flex;height:11px;background:#f7f7f7;border-top:1px solid #aaa;border-bottom:1px solid #bbb}
  .nav{width:35px;background:#aaa;display:flex;justify-content:space-around;align-items:center}
  .nav button{display:flex;opacity:.5}
  .t{background:#cfcfcf;border-right:1px solid #999;white-space:nowrap}
  .on{background:#f7f7f7;font-weight:700}
`, `<div class="nav">${btn('left', 'Pierwsza', 5)}${btn('left', 'Poprzednia', 5)}${btn('right', 'Następna', 5)}${btn('right', 'Ostatnia', 5)}</div>
  <button type="button" class="t on" style="width:31px">Model</button><button type="button" class="t" style="width:40px">Widoki 3D</button><button type="button" class="t" style="width:59px">Badanie ruchu 1</button>`);

define('cad-filters', `
  :host{display:flex;align-items:center;height:17px;background:#f7f7f7;border-bottom:1px solid #bbb;padding-left:2px}
  .grip{width:2px;height:12px;border-left:2px dotted #bbb;margin-right:3px}
  .a{display:flex;align-items:center}
  button{display:flex;width:15px;height:14px;align-items:center;justify-content:center}
  .sel{width:16px;background:#b4b4b4;border:1px solid #999}
  .dd{width:5px;border:1px solid #ccc;border-left:0}
  .sep{width:1px;height:12px;background:#c4c4c4}
  .b{display:flex;justify-content:space-between;width:417px;margin:0 3px}
  .b button{width:12px}
  .sep.l{height:16px;background:#aaa}
`, `<div class="grip"></div><div class="a" role="toolbar">${btn('f0', 'Filtr', 9)}${btn('f1', 'Wyczyść', 10)}${btn('f2', 'Wszystkie', 11)}<button type="button" class="sel" aria-label="Wybierz">${ico('arrow', 10)}</button><button type="button" class="dd" aria-label="Więcej">${ico('caret', 4)}</button>${btn('selx', 'Odwróć', 10)}</div><div class="sep"></div>
  <div class="b" role="toolbar">${[0, 1, 2, 3, 4, 5, 6, 0, 7, 8, 5, 9, 10, 11, 12, 13, 14, 15, 16, 17, 18, 19, 20, 21, 22, 23, 24, 25, 26].map(n => btn('t' + n, 'Filtr ' + n, 10)).join('')}</div><div class="sep l"></div>`);

define('cad-status', `
  :host{display:flex;align-items:center;height:10px;background:#f7f7f7;padding:0 2px 0 1px}
  .v{flex:1}
  .d{width:100px}.c{width:46px}.i{display:flex;gap:15px;align-items:center}
`, `<span class="v">SOLIDWORKS Premium 2023 SP0.1</span><span class="d">Edycja Część</span><span class="c">Dostosowany</span><span class="i">${ico('caret', 5)}${ico('target', 8)}</span>`);

define('cad-app', `
  :host{display:flex;flex-direction:column;height:100vh}
  main{flex:1;display:grid;grid-template-columns:auto minmax(0,1fr);grid-template-rows:minmax(0,1fr);min-height:0}
`, `<cad-titlebar></cad-titlebar><cad-ribbon></cad-ribbon><cad-tabs></cad-tabs><main><cad-tree></cad-tree><cad-view></cad-view></main><cad-sheets></cad-sheets><cad-filters></cad-filters><cad-status></cad-status>`);
</script>
</body>
</html>
